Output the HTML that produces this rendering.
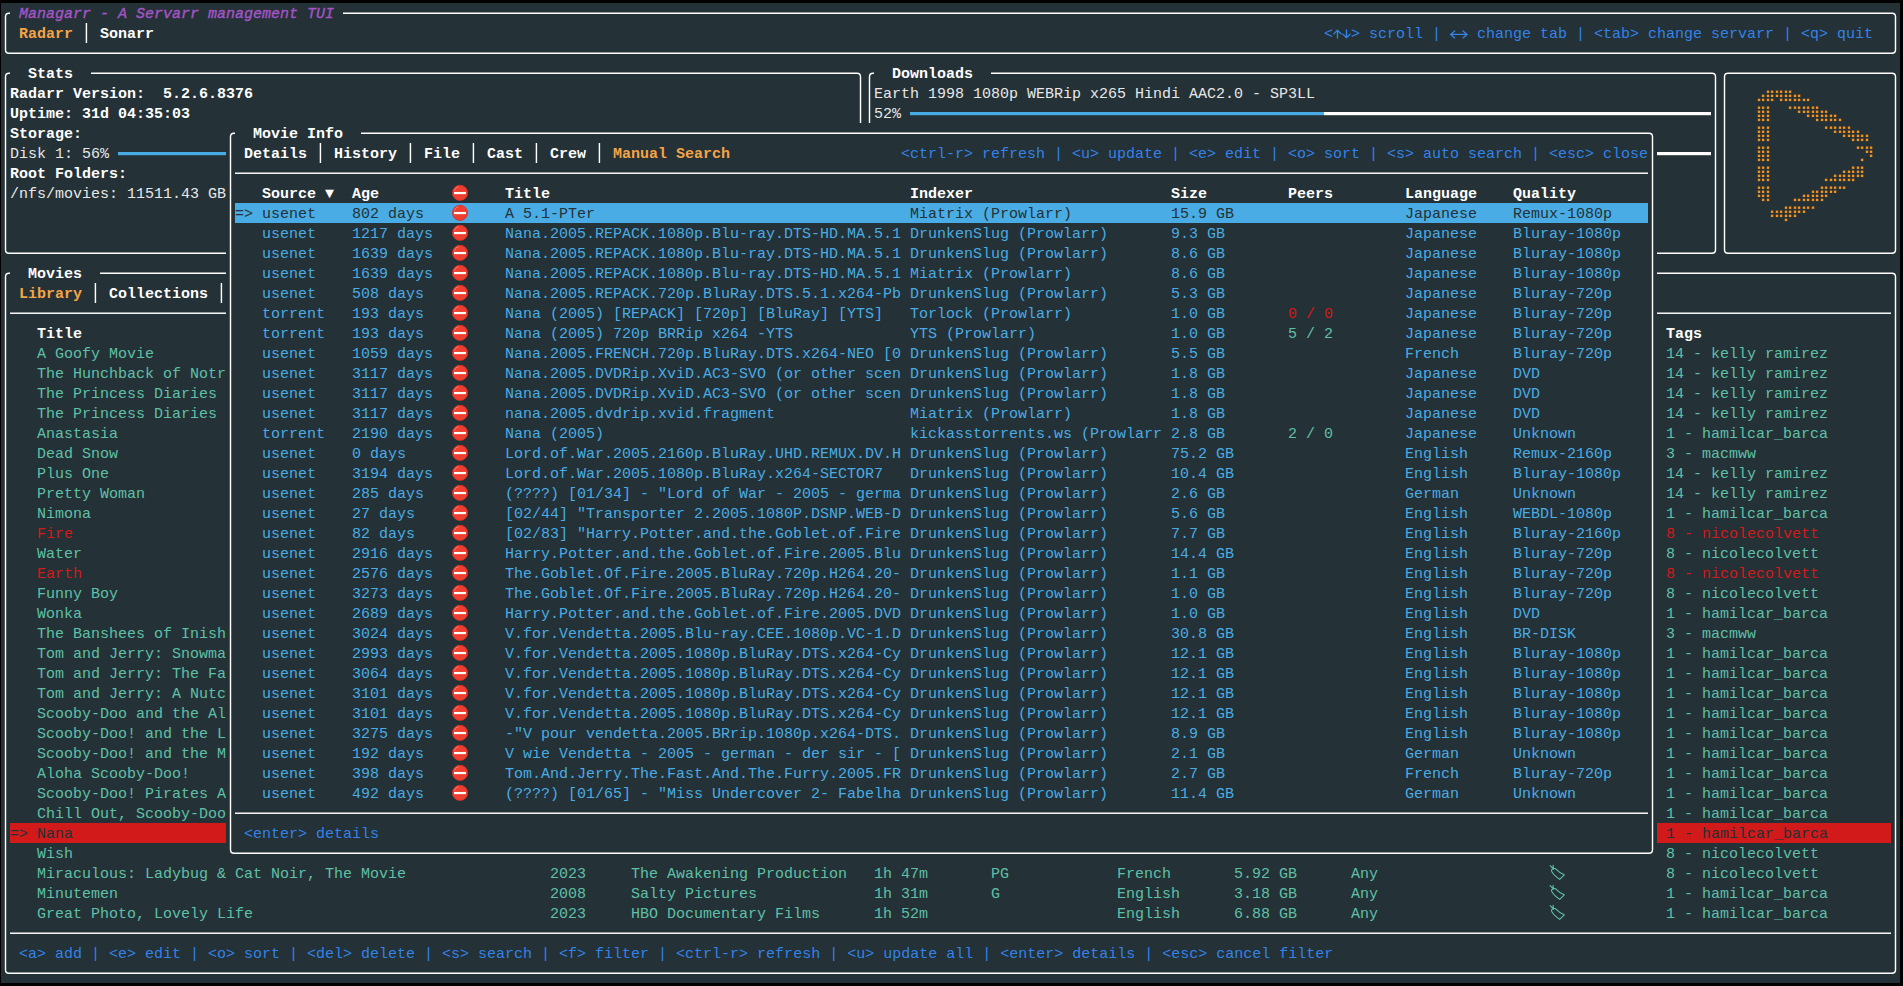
<!DOCTYPE html>
<html><head><meta charset="utf-8"><title>Managarr</title><style>
html,body{margin:0;padding:0;background:#000;width:1903px;height:986px;overflow:hidden;}
#t{position:absolute;left:1px;top:3px;width:1899px;height:980px;background:#243136;overflow:hidden;}
.x{position:absolute;white-space:pre;font-family:"Liberation Mono",monospace;font-size:15px;line-height:20px;height:20px;}
.b{font-weight:bold;}.i{font-style:italic;-webkit-text-stroke:0.35px currentColor;}
.r{position:absolute;}
svg{position:absolute;left:0;top:0;overflow:visible;}
</style></head><body><div id="t">
<svg width="1899" height="980" viewBox="0 0 1899 980"><path d="M8.00 10.30H1891.00Q1894.50 10.30 1894.50 13.80V46.80Q1894.50 50.30 1891.00 50.30H8.00Q4.50 50.30 4.50 46.80V13.80Q4.50 10.30 8.00 10.30Z" fill="none" stroke="#ffffff" stroke-width="1.45"/></svg>
<div class="r" style="left:9px;top:0px;width:333px;height:20px;background:#243136"></div>
<div class="x i" style="left:18px;top:2px;color:#a455c8">Managarr - A Servarr management TUI</div>
<div class="x b" style="left:18px;top:22px;color:#f5a447">Radarr</div>
<svg width="1899" height="980" viewBox="0 0 1899 980"><rect x="84.70" y="20" width="1.45" height="20" fill="#ffffff"/></svg>
<div class="x b" style="left:99px;top:22px;color:#ffffff">Sonarr</div>
<div class="x" style="left:1323px;top:22px;color:#3383e8">&lt;</div>
<div class="x" style="left:1350px;top:22px;color:#3383e8">&gt; scroll | </div>
<svg width="1899" height="980" viewBox="0 0 1899 980"><path d="M1336.50 35.10V27.20M1332.90 30.90L1336.50 27.20L1340.10 30.90M1345.50 26.90V34.80M1341.90 31.10L1345.50 34.80L1349.10 31.10M1449.50 31.40H1466.20M1453.70 27.90L1449.70 31.40L1453.70 34.90M1462.00 27.90L1466.00 31.40L1462.00 34.90" fill="none" stroke="#3383e8" stroke-width="1.35" stroke-linecap="round" stroke-linejoin="round"/></svg>
<div class="x" style="left:1467px;top:22px;color:#3383e8"> change tab | &lt;tab&gt; change servarr | &lt;q&gt; quit</div>
<svg width="1899" height="980" viewBox="0 0 1899 980"><path d="M8.00 70.30H856.00Q859.50 70.30 859.50 73.80V246.80Q859.50 250.30 856.00 250.30H8.00Q4.50 250.30 4.50 246.80V73.80Q4.50 70.30 8.00 70.30Z" fill="none" stroke="#ffffff" stroke-width="1.45"/></svg>
<div class="r" style="left:9px;top:60px;width:81px;height:20px;background:#243136"></div>
<div class="x b" style="left:27px;top:62px;color:#ffffff">Stats</div>
<div class="x b" style="left:9px;top:82px;color:#ffffff">Radarr Version:  5.2.6.8376</div>
<div class="x b" style="left:9px;top:102px;color:#ffffff">Uptime: 31d 04:35:03</div>
<div class="x b" style="left:9px;top:122px;color:#ffffff">Storage:</div>
<div class="x" style="left:9px;top:142px;color:#e8e8e8">Disk 1: 56%</div>
<svg width="1899" height="980" viewBox="0 0 1899 980"><rect x="117" y="149.00" width="405" height="3.2" fill="#4aace4"/><rect x="531" y="149.00" width="324" height="3.2" fill="#ffffff"/></svg>
<div class="x b" style="left:9px;top:162px;color:#ffffff">Root Folders:</div>
<div class="x" style="left:9px;top:182px;color:#e8e8e8">/nfs/movies: 11511.43 GB</div>
<svg width="1899" height="980" viewBox="0 0 1899 980"><path d="M872.00 70.30H1711.00Q1714.50 70.30 1714.50 73.80V246.80Q1714.50 250.30 1711.00 250.30H872.00Q868.50 250.30 868.50 246.80V73.80Q868.50 70.30 872.00 70.30Z" fill="none" stroke="#ffffff" stroke-width="1.45"/></svg>
<div class="r" style="left:873px;top:60px;width:117px;height:20px;background:#243136"></div>
<div class="x b" style="left:891px;top:62px;color:#ffffff">Downloads</div>
<div class="x" style="left:873px;top:82px;color:#e8e8e8">Earth 1998 1080p WEBRip x265 Hindi AAC2.0 - SP3LL</div>
<div class="x" style="left:873px;top:102px;color:#e8e8e8">52%</div>
<svg width="1899" height="980" viewBox="0 0 1899 980"><rect x="909" y="109.00" width="414" height="3.2" fill="#4aace4"/><rect x="1323" y="109.00" width="387" height="3.2" fill="#ffffff"/><rect x="1656" y="149.00" width="54" height="3.2" fill="#ffffff"/><path d="M1727.00 70.30H1891.00Q1894.50 70.30 1894.50 73.80V246.80Q1894.50 250.30 1891.00 250.30H1727.00Q1723.50 250.30 1723.50 246.80V73.80Q1723.50 70.30 1727.00 70.30Z" fill="none" stroke="#ffffff" stroke-width="1.45"/><rect x="1765.80" y="87.57" width="2.4" height="2.4" fill="#f7931a"/><rect x="1769.90" y="87.57" width="2.4" height="2.4" fill="#f7931a"/><rect x="1774.80" y="87.57" width="2.4" height="2.4" fill="#f7931a"/><rect x="1778.90" y="87.57" width="2.4" height="2.4" fill="#f7931a"/><rect x="1783.80" y="87.57" width="2.4" height="2.4" fill="#f7931a"/><rect x="1787.90" y="87.57" width="2.4" height="2.4" fill="#f7931a"/><rect x="1760.90" y="91.64" width="2.4" height="2.4" fill="#f7931a"/><rect x="1765.80" y="91.64" width="2.4" height="2.4" fill="#f7931a"/><rect x="1769.90" y="91.64" width="2.4" height="2.4" fill="#f7931a"/><rect x="1774.80" y="91.64" width="2.4" height="2.4" fill="#f7931a"/><rect x="1778.90" y="91.64" width="2.4" height="2.4" fill="#f7931a"/><rect x="1783.80" y="91.64" width="2.4" height="2.4" fill="#f7931a"/><rect x="1787.90" y="91.64" width="2.4" height="2.4" fill="#f7931a"/><rect x="1792.80" y="91.64" width="2.4" height="2.4" fill="#f7931a"/><rect x="1796.90" y="91.64" width="2.4" height="2.4" fill="#f7931a"/><rect x="1756.80" y="95.71" width="2.4" height="2.4" fill="#f7931a"/><rect x="1760.90" y="95.71" width="2.4" height="2.4" fill="#f7931a"/><rect x="1765.80" y="95.71" width="2.4" height="2.4" fill="#f7931a"/><rect x="1769.90" y="95.71" width="2.4" height="2.4" fill="#f7931a"/><rect x="1778.90" y="95.71" width="2.4" height="2.4" fill="#f7931a"/><rect x="1783.80" y="95.71" width="2.4" height="2.4" fill="#f7931a"/><rect x="1787.90" y="95.71" width="2.4" height="2.4" fill="#f7931a"/><rect x="1792.80" y="95.71" width="2.4" height="2.4" fill="#f7931a"/><rect x="1796.90" y="95.71" width="2.4" height="2.4" fill="#f7931a"/><rect x="1801.80" y="95.71" width="2.4" height="2.4" fill="#f7931a"/><rect x="1805.90" y="95.71" width="2.4" height="2.4" fill="#f7931a"/><rect x="1756.80" y="103.50" width="2.4" height="2.4" fill="#f7931a"/><rect x="1760.90" y="103.50" width="2.4" height="2.4" fill="#f7931a"/><rect x="1765.80" y="103.50" width="2.4" height="2.4" fill="#f7931a"/><rect x="1787.90" y="103.50" width="2.4" height="2.4" fill="#f7931a"/><rect x="1792.80" y="103.50" width="2.4" height="2.4" fill="#f7931a"/><rect x="1796.90" y="103.50" width="2.4" height="2.4" fill="#f7931a"/><rect x="1801.80" y="103.50" width="2.4" height="2.4" fill="#f7931a"/><rect x="1805.90" y="103.50" width="2.4" height="2.4" fill="#f7931a"/><rect x="1810.80" y="103.50" width="2.4" height="2.4" fill="#f7931a"/><rect x="1814.90" y="103.50" width="2.4" height="2.4" fill="#f7931a"/><rect x="1756.80" y="107.57" width="2.4" height="2.4" fill="#f7931a"/><rect x="1760.90" y="107.57" width="2.4" height="2.4" fill="#f7931a"/><rect x="1765.80" y="107.57" width="2.4" height="2.4" fill="#f7931a"/><rect x="1796.90" y="107.57" width="2.4" height="2.4" fill="#f7931a"/><rect x="1801.80" y="107.57" width="2.4" height="2.4" fill="#f7931a"/><rect x="1805.90" y="107.57" width="2.4" height="2.4" fill="#f7931a"/><rect x="1810.80" y="107.57" width="2.4" height="2.4" fill="#f7931a"/><rect x="1814.90" y="107.57" width="2.4" height="2.4" fill="#f7931a"/><rect x="1819.80" y="107.57" width="2.4" height="2.4" fill="#f7931a"/><rect x="1823.90" y="107.57" width="2.4" height="2.4" fill="#f7931a"/><rect x="1756.80" y="111.64" width="2.4" height="2.4" fill="#f7931a"/><rect x="1760.90" y="111.64" width="2.4" height="2.4" fill="#f7931a"/><rect x="1765.80" y="111.64" width="2.4" height="2.4" fill="#f7931a"/><rect x="1805.90" y="111.64" width="2.4" height="2.4" fill="#f7931a"/><rect x="1810.80" y="111.64" width="2.4" height="2.4" fill="#f7931a"/><rect x="1814.90" y="111.64" width="2.4" height="2.4" fill="#f7931a"/><rect x="1819.80" y="111.64" width="2.4" height="2.4" fill="#f7931a"/><rect x="1823.90" y="111.64" width="2.4" height="2.4" fill="#f7931a"/><rect x="1828.80" y="111.64" width="2.4" height="2.4" fill="#f7931a"/><rect x="1832.90" y="111.64" width="2.4" height="2.4" fill="#f7931a"/><rect x="1756.80" y="115.71" width="2.4" height="2.4" fill="#f7931a"/><rect x="1760.90" y="115.71" width="2.4" height="2.4" fill="#f7931a"/><rect x="1765.80" y="115.71" width="2.4" height="2.4" fill="#f7931a"/><rect x="1814.90" y="115.71" width="2.4" height="2.4" fill="#f7931a"/><rect x="1819.80" y="115.71" width="2.4" height="2.4" fill="#f7931a"/><rect x="1823.90" y="115.71" width="2.4" height="2.4" fill="#f7931a"/><rect x="1828.80" y="115.71" width="2.4" height="2.4" fill="#f7931a"/><rect x="1832.90" y="115.71" width="2.4" height="2.4" fill="#f7931a"/><rect x="1837.80" y="115.71" width="2.4" height="2.4" fill="#f7931a"/><rect x="1756.80" y="123.50" width="2.4" height="2.4" fill="#f7931a"/><rect x="1760.90" y="123.50" width="2.4" height="2.4" fill="#f7931a"/><rect x="1765.80" y="123.50" width="2.4" height="2.4" fill="#f7931a"/><rect x="1823.90" y="123.50" width="2.4" height="2.4" fill="#f7931a"/><rect x="1828.80" y="123.50" width="2.4" height="2.4" fill="#f7931a"/><rect x="1832.90" y="123.50" width="2.4" height="2.4" fill="#f7931a"/><rect x="1837.80" y="123.50" width="2.4" height="2.4" fill="#f7931a"/><rect x="1841.90" y="123.50" width="2.4" height="2.4" fill="#f7931a"/><rect x="1846.80" y="123.50" width="2.4" height="2.4" fill="#f7931a"/><rect x="1756.80" y="127.57" width="2.4" height="2.4" fill="#f7931a"/><rect x="1760.90" y="127.57" width="2.4" height="2.4" fill="#f7931a"/><rect x="1765.80" y="127.57" width="2.4" height="2.4" fill="#f7931a"/><rect x="1832.90" y="127.57" width="2.4" height="2.4" fill="#f7931a"/><rect x="1837.80" y="127.57" width="2.4" height="2.4" fill="#f7931a"/><rect x="1841.90" y="127.57" width="2.4" height="2.4" fill="#f7931a"/><rect x="1846.80" y="127.57" width="2.4" height="2.4" fill="#f7931a"/><rect x="1850.90" y="127.57" width="2.4" height="2.4" fill="#f7931a"/><rect x="1855.80" y="127.57" width="2.4" height="2.4" fill="#f7931a"/><rect x="1756.80" y="131.64" width="2.4" height="2.4" fill="#f7931a"/><rect x="1760.90" y="131.64" width="2.4" height="2.4" fill="#f7931a"/><rect x="1765.80" y="131.64" width="2.4" height="2.4" fill="#f7931a"/><rect x="1841.90" y="131.64" width="2.4" height="2.4" fill="#f7931a"/><rect x="1846.80" y="131.64" width="2.4" height="2.4" fill="#f7931a"/><rect x="1850.90" y="131.64" width="2.4" height="2.4" fill="#f7931a"/><rect x="1855.80" y="131.64" width="2.4" height="2.4" fill="#f7931a"/><rect x="1859.90" y="131.64" width="2.4" height="2.4" fill="#f7931a"/><rect x="1864.80" y="131.64" width="2.4" height="2.4" fill="#f7931a"/><rect x="1756.80" y="135.71" width="2.4" height="2.4" fill="#f7931a"/><rect x="1760.90" y="135.71" width="2.4" height="2.4" fill="#f7931a"/><rect x="1765.80" y="135.71" width="2.4" height="2.4" fill="#f7931a"/><rect x="1850.90" y="135.71" width="2.4" height="2.4" fill="#f7931a"/><rect x="1855.80" y="135.71" width="2.4" height="2.4" fill="#f7931a"/><rect x="1859.90" y="135.71" width="2.4" height="2.4" fill="#f7931a"/><rect x="1864.80" y="135.71" width="2.4" height="2.4" fill="#f7931a"/><rect x="1756.80" y="143.50" width="2.4" height="2.4" fill="#f7931a"/><rect x="1760.90" y="143.50" width="2.4" height="2.4" fill="#f7931a"/><rect x="1765.80" y="143.50" width="2.4" height="2.4" fill="#f7931a"/><rect x="1855.80" y="143.50" width="2.4" height="2.4" fill="#f7931a"/><rect x="1859.90" y="143.50" width="2.4" height="2.4" fill="#f7931a"/><rect x="1864.80" y="143.50" width="2.4" height="2.4" fill="#f7931a"/><rect x="1868.90" y="143.50" width="2.4" height="2.4" fill="#f7931a"/><rect x="1756.80" y="147.57" width="2.4" height="2.4" fill="#f7931a"/><rect x="1760.90" y="147.57" width="2.4" height="2.4" fill="#f7931a"/><rect x="1765.80" y="147.57" width="2.4" height="2.4" fill="#f7931a"/><rect x="1864.80" y="147.57" width="2.4" height="2.4" fill="#f7931a"/><rect x="1868.90" y="147.57" width="2.4" height="2.4" fill="#f7931a"/><rect x="1756.80" y="151.64" width="2.4" height="2.4" fill="#f7931a"/><rect x="1760.90" y="151.64" width="2.4" height="2.4" fill="#f7931a"/><rect x="1765.80" y="151.64" width="2.4" height="2.4" fill="#f7931a"/><rect x="1868.90" y="151.64" width="2.4" height="2.4" fill="#f7931a"/><rect x="1756.80" y="155.71" width="2.4" height="2.4" fill="#f7931a"/><rect x="1760.90" y="155.71" width="2.4" height="2.4" fill="#f7931a"/><rect x="1765.80" y="155.71" width="2.4" height="2.4" fill="#f7931a"/><rect x="1859.90" y="155.71" width="2.4" height="2.4" fill="#f7931a"/><rect x="1756.80" y="163.50" width="2.4" height="2.4" fill="#f7931a"/><rect x="1760.90" y="163.50" width="2.4" height="2.4" fill="#f7931a"/><rect x="1765.80" y="163.50" width="2.4" height="2.4" fill="#f7931a"/><rect x="1850.90" y="163.50" width="2.4" height="2.4" fill="#f7931a"/><rect x="1855.80" y="163.50" width="2.4" height="2.4" fill="#f7931a"/><rect x="1859.90" y="163.50" width="2.4" height="2.4" fill="#f7931a"/><rect x="1756.80" y="167.57" width="2.4" height="2.4" fill="#f7931a"/><rect x="1760.90" y="167.57" width="2.4" height="2.4" fill="#f7931a"/><rect x="1765.80" y="167.57" width="2.4" height="2.4" fill="#f7931a"/><rect x="1841.90" y="167.57" width="2.4" height="2.4" fill="#f7931a"/><rect x="1846.80" y="167.57" width="2.4" height="2.4" fill="#f7931a"/><rect x="1850.90" y="167.57" width="2.4" height="2.4" fill="#f7931a"/><rect x="1855.80" y="167.57" width="2.4" height="2.4" fill="#f7931a"/><rect x="1859.90" y="167.57" width="2.4" height="2.4" fill="#f7931a"/><rect x="1756.80" y="171.64" width="2.4" height="2.4" fill="#f7931a"/><rect x="1760.90" y="171.64" width="2.4" height="2.4" fill="#f7931a"/><rect x="1765.80" y="171.64" width="2.4" height="2.4" fill="#f7931a"/><rect x="1832.90" y="171.64" width="2.4" height="2.4" fill="#f7931a"/><rect x="1837.80" y="171.64" width="2.4" height="2.4" fill="#f7931a"/><rect x="1841.90" y="171.64" width="2.4" height="2.4" fill="#f7931a"/><rect x="1846.80" y="171.64" width="2.4" height="2.4" fill="#f7931a"/><rect x="1850.90" y="171.64" width="2.4" height="2.4" fill="#f7931a"/><rect x="1855.80" y="171.64" width="2.4" height="2.4" fill="#f7931a"/><rect x="1859.90" y="171.64" width="2.4" height="2.4" fill="#f7931a"/><rect x="1756.80" y="175.71" width="2.4" height="2.4" fill="#f7931a"/><rect x="1760.90" y="175.71" width="2.4" height="2.4" fill="#f7931a"/><rect x="1765.80" y="175.71" width="2.4" height="2.4" fill="#f7931a"/><rect x="1823.90" y="175.71" width="2.4" height="2.4" fill="#f7931a"/><rect x="1828.80" y="175.71" width="2.4" height="2.4" fill="#f7931a"/><rect x="1832.90" y="175.71" width="2.4" height="2.4" fill="#f7931a"/><rect x="1837.80" y="175.71" width="2.4" height="2.4" fill="#f7931a"/><rect x="1841.90" y="175.71" width="2.4" height="2.4" fill="#f7931a"/><rect x="1846.80" y="175.71" width="2.4" height="2.4" fill="#f7931a"/><rect x="1850.90" y="175.71" width="2.4" height="2.4" fill="#f7931a"/><rect x="1756.80" y="183.50" width="2.4" height="2.4" fill="#f7931a"/><rect x="1760.90" y="183.50" width="2.4" height="2.4" fill="#f7931a"/><rect x="1765.80" y="183.50" width="2.4" height="2.4" fill="#f7931a"/><rect x="1819.80" y="183.50" width="2.4" height="2.4" fill="#f7931a"/><rect x="1823.90" y="183.50" width="2.4" height="2.4" fill="#f7931a"/><rect x="1828.80" y="183.50" width="2.4" height="2.4" fill="#f7931a"/><rect x="1832.90" y="183.50" width="2.4" height="2.4" fill="#f7931a"/><rect x="1837.80" y="183.50" width="2.4" height="2.4" fill="#f7931a"/><rect x="1841.90" y="183.50" width="2.4" height="2.4" fill="#f7931a"/><rect x="1756.80" y="187.57" width="2.4" height="2.4" fill="#f7931a"/><rect x="1760.90" y="187.57" width="2.4" height="2.4" fill="#f7931a"/><rect x="1765.80" y="187.57" width="2.4" height="2.4" fill="#f7931a"/><rect x="1810.80" y="187.57" width="2.4" height="2.4" fill="#f7931a"/><rect x="1814.90" y="187.57" width="2.4" height="2.4" fill="#f7931a"/><rect x="1819.80" y="187.57" width="2.4" height="2.4" fill="#f7931a"/><rect x="1823.90" y="187.57" width="2.4" height="2.4" fill="#f7931a"/><rect x="1828.80" y="187.57" width="2.4" height="2.4" fill="#f7931a"/><rect x="1832.90" y="187.57" width="2.4" height="2.4" fill="#f7931a"/><rect x="1756.80" y="191.64" width="2.4" height="2.4" fill="#f7931a"/><rect x="1760.90" y="191.64" width="2.4" height="2.4" fill="#f7931a"/><rect x="1765.80" y="191.64" width="2.4" height="2.4" fill="#f7931a"/><rect x="1801.80" y="191.64" width="2.4" height="2.4" fill="#f7931a"/><rect x="1805.90" y="191.64" width="2.4" height="2.4" fill="#f7931a"/><rect x="1810.80" y="191.64" width="2.4" height="2.4" fill="#f7931a"/><rect x="1814.90" y="191.64" width="2.4" height="2.4" fill="#f7931a"/><rect x="1819.80" y="191.64" width="2.4" height="2.4" fill="#f7931a"/><rect x="1823.90" y="191.64" width="2.4" height="2.4" fill="#f7931a"/><rect x="1760.90" y="195.71" width="2.4" height="2.4" fill="#f7931a"/><rect x="1765.80" y="195.71" width="2.4" height="2.4" fill="#f7931a"/><rect x="1792.80" y="195.71" width="2.4" height="2.4" fill="#f7931a"/><rect x="1796.90" y="195.71" width="2.4" height="2.4" fill="#f7931a"/><rect x="1801.80" y="195.71" width="2.4" height="2.4" fill="#f7931a"/><rect x="1805.90" y="195.71" width="2.4" height="2.4" fill="#f7931a"/><rect x="1810.80" y="195.71" width="2.4" height="2.4" fill="#f7931a"/><rect x="1814.90" y="195.71" width="2.4" height="2.4" fill="#f7931a"/><rect x="1819.80" y="195.71" width="2.4" height="2.4" fill="#f7931a"/><rect x="1783.80" y="203.50" width="2.4" height="2.4" fill="#f7931a"/><rect x="1787.90" y="203.50" width="2.4" height="2.4" fill="#f7931a"/><rect x="1792.80" y="203.50" width="2.4" height="2.4" fill="#f7931a"/><rect x="1796.90" y="203.50" width="2.4" height="2.4" fill="#f7931a"/><rect x="1801.80" y="203.50" width="2.4" height="2.4" fill="#f7931a"/><rect x="1805.90" y="203.50" width="2.4" height="2.4" fill="#f7931a"/><rect x="1810.80" y="203.50" width="2.4" height="2.4" fill="#f7931a"/><rect x="1769.90" y="207.57" width="2.4" height="2.4" fill="#f7931a"/><rect x="1774.80" y="207.57" width="2.4" height="2.4" fill="#f7931a"/><rect x="1778.90" y="207.57" width="2.4" height="2.4" fill="#f7931a"/><rect x="1783.80" y="207.57" width="2.4" height="2.4" fill="#f7931a"/><rect x="1787.90" y="207.57" width="2.4" height="2.4" fill="#f7931a"/><rect x="1792.80" y="207.57" width="2.4" height="2.4" fill="#f7931a"/><rect x="1796.90" y="207.57" width="2.4" height="2.4" fill="#f7931a"/><rect x="1801.80" y="207.57" width="2.4" height="2.4" fill="#f7931a"/><rect x="1769.90" y="211.64" width="2.4" height="2.4" fill="#f7931a"/><rect x="1774.80" y="211.64" width="2.4" height="2.4" fill="#f7931a"/><rect x="1778.90" y="211.64" width="2.4" height="2.4" fill="#f7931a"/><rect x="1783.80" y="211.64" width="2.4" height="2.4" fill="#f7931a"/><rect x="1787.90" y="211.64" width="2.4" height="2.4" fill="#f7931a"/><rect x="1792.80" y="211.64" width="2.4" height="2.4" fill="#f7931a"/><rect x="1783.80" y="215.71" width="2.4" height="2.4" fill="#f7931a"/><path d="M8.00 270.30H1891.00Q1894.50 270.30 1894.50 273.80V966.80Q1894.50 970.30 1891.00 970.30H8.00Q4.50 970.30 4.50 966.80V273.80Q4.50 270.30 8.00 270.30Z" fill="none" stroke="#ffffff" stroke-width="1.45"/></svg>
<div class="r" style="left:9px;top:260px;width:90px;height:20px;background:#243136"></div>
<div class="x b" style="left:27px;top:262px;color:#ffffff">Movies</div>
<div class="x b" style="left:18px;top:282px;color:#f5a447">Library</div>
<svg width="1899" height="980" viewBox="0 0 1899 980"><rect x="93.70" y="280" width="1.45" height="20" fill="#ffffff"/></svg>
<div class="x b" style="left:108px;top:282px;color:#ffffff">Collections</div>
<svg width="1899" height="980" viewBox="0 0 1899 980"><rect x="219.70" y="280" width="1.45" height="20" fill="#ffffff"/><rect x="9" y="309.50" width="1881" height="1.45" fill="#ffffff"/></svg>
<div class="x b" style="left:36px;top:322px;color:#ffffff">Title</div>
<div class="x b" style="left:1665px;top:322px;color:#ffffff">Tags</div>
<div class="x" style="left:36px;top:342px;color:#5fc0a8">A Goofy Movie</div>
<div class="x" style="left:1665px;top:342px;color:#5fc0a8">14 - kelly ramirez</div>
<div class="x" style="left:36px;top:362px;color:#5fc0a8">The Hunchback of Notr</div>
<div class="x" style="left:1665px;top:362px;color:#5fc0a8">14 - kelly ramirez</div>
<div class="x" style="left:36px;top:382px;color:#5fc0a8">The Princess Diaries</div>
<div class="x" style="left:1665px;top:382px;color:#5fc0a8">14 - kelly ramirez</div>
<div class="x" style="left:36px;top:402px;color:#5fc0a8">The Princess Diaries</div>
<div class="x" style="left:1665px;top:402px;color:#5fc0a8">14 - kelly ramirez</div>
<div class="x" style="left:36px;top:422px;color:#5fc0a8">Anastasia</div>
<div class="x" style="left:1665px;top:422px;color:#5fc0a8">1 - hamilcar_barca</div>
<div class="x" style="left:36px;top:442px;color:#5fc0a8">Dead Snow</div>
<div class="x" style="left:1665px;top:442px;color:#5fc0a8">3 - macmww</div>
<div class="x" style="left:36px;top:462px;color:#5fc0a8">Plus One</div>
<div class="x" style="left:1665px;top:462px;color:#5fc0a8">14 - kelly ramirez</div>
<div class="x" style="left:36px;top:482px;color:#5fc0a8">Pretty Woman</div>
<div class="x" style="left:1665px;top:482px;color:#5fc0a8">14 - kelly ramirez</div>
<div class="x" style="left:36px;top:502px;color:#5fc0a8">Nimona</div>
<div class="x" style="left:1665px;top:502px;color:#5fc0a8">1 - hamilcar_barca</div>
<div class="x" style="left:36px;top:522px;color:#d21a1a">Fire</div>
<div class="x" style="left:1665px;top:522px;color:#d21a1a">8 - nicolecolvett</div>
<div class="x" style="left:36px;top:542px;color:#5fc0a8">Water</div>
<div class="x" style="left:1665px;top:542px;color:#5fc0a8">8 - nicolecolvett</div>
<div class="x" style="left:36px;top:562px;color:#d21a1a">Earth</div>
<div class="x" style="left:1665px;top:562px;color:#d21a1a">8 - nicolecolvett</div>
<div class="x" style="left:36px;top:582px;color:#5fc0a8">Funny Boy</div>
<div class="x" style="left:1665px;top:582px;color:#5fc0a8">8 - nicolecolvett</div>
<div class="x" style="left:36px;top:602px;color:#5fc0a8">Wonka</div>
<div class="x" style="left:1665px;top:602px;color:#5fc0a8">1 - hamilcar_barca</div>
<div class="x" style="left:36px;top:622px;color:#5fc0a8">The Banshees of Inish</div>
<div class="x" style="left:1665px;top:622px;color:#5fc0a8">3 - macmww</div>
<div class="x" style="left:36px;top:642px;color:#5fc0a8">Tom and Jerry: Snowma</div>
<div class="x" style="left:1665px;top:642px;color:#5fc0a8">1 - hamilcar_barca</div>
<div class="x" style="left:36px;top:662px;color:#5fc0a8">Tom and Jerry: The Fa</div>
<div class="x" style="left:1665px;top:662px;color:#5fc0a8">1 - hamilcar_barca</div>
<div class="x" style="left:36px;top:682px;color:#5fc0a8">Tom and Jerry: A Nutc</div>
<div class="x" style="left:1665px;top:682px;color:#5fc0a8">1 - hamilcar_barca</div>
<div class="x" style="left:36px;top:702px;color:#5fc0a8">Scooby-Doo and the Al</div>
<div class="x" style="left:1665px;top:702px;color:#5fc0a8">1 - hamilcar_barca</div>
<div class="x" style="left:36px;top:722px;color:#5fc0a8">Scooby-Doo! and the L</div>
<div class="x" style="left:1665px;top:722px;color:#5fc0a8">1 - hamilcar_barca</div>
<div class="x" style="left:36px;top:742px;color:#5fc0a8">Scooby-Doo! and the M</div>
<div class="x" style="left:1665px;top:742px;color:#5fc0a8">1 - hamilcar_barca</div>
<div class="x" style="left:36px;top:762px;color:#5fc0a8">Aloha Scooby-Doo!</div>
<div class="x" style="left:1665px;top:762px;color:#5fc0a8">1 - hamilcar_barca</div>
<div class="x" style="left:36px;top:782px;color:#5fc0a8">Scooby-Doo! Pirates A</div>
<div class="x" style="left:1665px;top:782px;color:#5fc0a8">1 - hamilcar_barca</div>
<div class="x" style="left:36px;top:802px;color:#5fc0a8">Chill Out, Scooby-Doo</div>
<div class="x" style="left:1665px;top:802px;color:#5fc0a8">1 - hamilcar_barca</div>
<div class="r" style="left:9px;top:820px;width:216px;height:20px;background:#d21a1a"></div>
<div class="r" style="left:1656px;top:820px;width:234px;height:20px;background:#d21a1a"></div>
<div class="x" style="left:9px;top:822px;color:#243136">=&gt;</div>
<div class="x" style="left:36px;top:822px;color:#243136">Nana</div>
<div class="x" style="left:1665px;top:822px;color:#243136">1 - hamilcar_barca</div>
<div class="x" style="left:36px;top:842px;color:#5fc0a8">Wish</div>
<div class="x" style="left:1665px;top:842px;color:#5fc0a8">8 - nicolecolvett</div>
<div class="x" style="left:36px;top:862px;color:#5fc0a8">Miraculous: Ladybug &amp; Cat Noir, The Movie</div>
<div class="x" style="left:549px;top:862px;color:#5fc0a8">2023</div>
<div class="x" style="left:630px;top:862px;color:#5fc0a8">The Awakening Production</div>
<div class="x" style="left:873px;top:862px;color:#5fc0a8">1h 47m</div>
<div class="x" style="left:990px;top:862px;color:#5fc0a8">PG</div>
<div class="x" style="left:1116px;top:862px;color:#5fc0a8">French</div>
<div class="x" style="left:1233px;top:862px;color:#5fc0a8">5.92 GB</div>
<div class="x" style="left:1350px;top:862px;color:#5fc0a8">Any</div>
<svg width="1899" height="980" viewBox="0 0 1899 980"><path d="M1550.40 866.90Q1550.50 870.40 1558.70 876.40L1563.30 871.80Q1558.40 869.90 1554.40 865.60Q1552.50 865.30 1550.40 866.90Z" fill="none" stroke="#5fc0a8" stroke-width="1.1" stroke-linejoin="round"/><path d="M1549.10 862.60L1552.40 865.80L1552.10 862.30" fill="none" stroke="#5fc0a8" stroke-width="1.1" stroke-linecap="round"/></svg>
<div class="x" style="left:1665px;top:862px;color:#5fc0a8">8 - nicolecolvett</div>
<div class="x" style="left:36px;top:882px;color:#5fc0a8">Minutemen</div>
<div class="x" style="left:549px;top:882px;color:#5fc0a8">2008</div>
<div class="x" style="left:630px;top:882px;color:#5fc0a8">Salty Pictures</div>
<div class="x" style="left:873px;top:882px;color:#5fc0a8">1h 31m</div>
<div class="x" style="left:990px;top:882px;color:#5fc0a8">G</div>
<div class="x" style="left:1116px;top:882px;color:#5fc0a8">English</div>
<div class="x" style="left:1233px;top:882px;color:#5fc0a8">3.18 GB</div>
<div class="x" style="left:1350px;top:882px;color:#5fc0a8">Any</div>
<svg width="1899" height="980" viewBox="0 0 1899 980"><path d="M1550.40 886.90Q1550.50 890.40 1558.70 896.40L1563.30 891.80Q1558.40 889.90 1554.40 885.60Q1552.50 885.30 1550.40 886.90Z" fill="none" stroke="#5fc0a8" stroke-width="1.1" stroke-linejoin="round"/><path d="M1549.10 882.60L1552.40 885.80L1552.10 882.30" fill="none" stroke="#5fc0a8" stroke-width="1.1" stroke-linecap="round"/></svg>
<div class="x" style="left:1665px;top:882px;color:#5fc0a8">1 - hamilcar_barca</div>
<div class="x" style="left:36px;top:902px;color:#5fc0a8">Great Photo, Lovely Life</div>
<div class="x" style="left:549px;top:902px;color:#5fc0a8">2023</div>
<div class="x" style="left:630px;top:902px;color:#5fc0a8">HBO Documentary Films</div>
<div class="x" style="left:873px;top:902px;color:#5fc0a8">1h 52m</div>
<div class="x" style="left:1116px;top:902px;color:#5fc0a8">English</div>
<div class="x" style="left:1233px;top:902px;color:#5fc0a8">6.88 GB</div>
<div class="x" style="left:1350px;top:902px;color:#5fc0a8">Any</div>
<svg width="1899" height="980" viewBox="0 0 1899 980"><path d="M1550.40 906.90Q1550.50 910.40 1558.70 916.40L1563.30 911.80Q1558.40 909.90 1554.40 905.60Q1552.50 905.30 1550.40 906.90Z" fill="none" stroke="#5fc0a8" stroke-width="1.1" stroke-linejoin="round"/><path d="M1549.10 902.60L1552.40 905.80L1552.10 902.30" fill="none" stroke="#5fc0a8" stroke-width="1.1" stroke-linecap="round"/></svg>
<div class="x" style="left:1665px;top:902px;color:#5fc0a8">1 - hamilcar_barca</div>
<svg width="1899" height="980" viewBox="0 0 1899 980"><rect x="9" y="929.50" width="1881" height="1.45" fill="#ffffff"/></svg>
<div class="x" style="left:18px;top:942px;color:#3383e8">&lt;a&gt; add | &lt;e&gt; edit | &lt;o&gt; sort | &lt;del&gt; delete | &lt;s&gt; search | &lt;f&gt; filter | &lt;ctrl-r&gt; refresh | &lt;u&gt; update all | &lt;enter&gt; details | &lt;esc&gt; cancel filter</div>
<div class="r" style="left:225px;top:120px;width:1431px;height:740px;background:#243136"></div>
<svg width="1899" height="980" viewBox="0 0 1899 980"><path d="M233.00 130.30H1648.00Q1651.50 130.30 1651.50 133.80V846.80Q1651.50 850.30 1648.00 850.30H233.00Q229.50 850.30 229.50 846.80V133.80Q229.50 130.30 233.00 130.30Z" fill="none" stroke="#ffffff" stroke-width="1.45"/></svg>
<div class="r" style="left:234px;top:120px;width:126px;height:20px;background:#243136"></div>
<div class="x b" style="left:252px;top:122px;color:#ffffff">Movie Info</div>
<div class="x b" style="left:243px;top:142px;color:#ffffff">Details</div>
<svg width="1899" height="980" viewBox="0 0 1899 980"><rect x="318.70" y="140" width="1.45" height="20" fill="#ffffff"/></svg>
<div class="x b" style="left:333px;top:142px;color:#ffffff">History</div>
<svg width="1899" height="980" viewBox="0 0 1899 980"><rect x="408.70" y="140" width="1.45" height="20" fill="#ffffff"/></svg>
<div class="x b" style="left:423px;top:142px;color:#ffffff">File</div>
<svg width="1899" height="980" viewBox="0 0 1899 980"><rect x="471.70" y="140" width="1.45" height="20" fill="#ffffff"/></svg>
<div class="x b" style="left:486px;top:142px;color:#ffffff">Cast</div>
<svg width="1899" height="980" viewBox="0 0 1899 980"><rect x="534.70" y="140" width="1.45" height="20" fill="#ffffff"/></svg>
<div class="x b" style="left:549px;top:142px;color:#ffffff">Crew</div>
<svg width="1899" height="980" viewBox="0 0 1899 980"><rect x="597.70" y="140" width="1.45" height="20" fill="#ffffff"/></svg>
<div class="x b" style="left:612px;top:142px;color:#f5a447">Manual Search</div>
<div class="x" style="left:900px;top:142px;color:#3383e8">&lt;ctrl-r&gt; refresh | &lt;u&gt; update | &lt;e&gt; edit | &lt;o&gt; sort | &lt;s&gt; auto search | &lt;esc&gt; close</div>
<svg width="1899" height="980" viewBox="0 0 1899 980"><rect x="234" y="169.50" width="1413" height="1.45" fill="#ffffff"/></svg>
<div class="x b" style="left:261px;top:182px;color:#ffffff">Source ▼</div>
<div class="x b" style="left:351px;top:182px;color:#ffffff">Age</div>
<svg width="1899" height="980" viewBox="0 0 1899 980"><circle cx="459.00" cy="189.85" r="7.6" fill="#ee3e2f" stroke="#d9302a" stroke-width="0.8"/><path d="M453.40 187.25Q454.40 184.45 457.20 183.65" fill="none" stroke="#ff8a7a" stroke-width="1" stroke-linecap="round" opacity="0.8"/><rect x="453.00" y="188.95" width="12" height="2.2" fill="#fff"/></svg>
<div class="x b" style="left:504px;top:182px;color:#ffffff">Title</div>
<div class="x b" style="left:909px;top:182px;color:#ffffff">Indexer</div>
<div class="x b" style="left:1170px;top:182px;color:#ffffff">Size</div>
<div class="x b" style="left:1287px;top:182px;color:#ffffff">Peers</div>
<div class="x b" style="left:1404px;top:182px;color:#ffffff">Language</div>
<div class="x b" style="left:1512px;top:182px;color:#ffffff">Quality</div>
<div class="r" style="left:234px;top:200px;width:1413px;height:20px;background:#4aace4"></div>
<div class="x" style="left:234px;top:202px;color:#243136">=&gt;</div>
<div class="x" style="left:261px;top:202px;color:#243136">usenet</div>
<div class="x" style="left:351px;top:202px;color:#243136">802 days</div>
<svg width="1899" height="980" viewBox="0 0 1899 980"><circle cx="459.00" cy="209.85" r="7.6" fill="#ee3e2f" stroke="#d9302a" stroke-width="0.8"/><path d="M453.40 207.25Q454.40 204.45 457.20 203.65" fill="none" stroke="#ff8a7a" stroke-width="1" stroke-linecap="round" opacity="0.8"/><rect x="453.00" y="208.95" width="12" height="2.2" fill="#fff"/></svg>
<div class="x" style="left:504px;top:202px;color:#243136">A 5.1-PTer</div>
<div class="x" style="left:909px;top:202px;color:#243136">Miatrix (Prowlarr)</div>
<div class="x" style="left:1170px;top:202px;color:#243136">15.9 GB</div>
<div class="x" style="left:1404px;top:202px;color:#243136">Japanese</div>
<div class="x" style="left:1512px;top:202px;color:#243136">Remux-1080p</div>
<div class="x" style="left:261px;top:222px;color:#4aace4">usenet</div>
<div class="x" style="left:351px;top:222px;color:#4aace4">1217 days</div>
<svg width="1899" height="980" viewBox="0 0 1899 980"><circle cx="459.00" cy="229.85" r="7.6" fill="#ee3e2f" stroke="#d9302a" stroke-width="0.8"/><path d="M453.40 227.25Q454.40 224.45 457.20 223.65" fill="none" stroke="#ff8a7a" stroke-width="1" stroke-linecap="round" opacity="0.8"/><rect x="453.00" y="228.95" width="12" height="2.2" fill="#fff"/></svg>
<div class="x" style="left:504px;top:222px;color:#4aace4">Nana.2005.REPACK.1080p.Blu-ray.DTS-HD.MA.5.1</div>
<div class="x" style="left:909px;top:222px;color:#4aace4">DrunkenSlug (Prowlarr)</div>
<div class="x" style="left:1170px;top:222px;color:#4aace4">9.3 GB</div>
<div class="x" style="left:1404px;top:222px;color:#4aace4">Japanese</div>
<div class="x" style="left:1512px;top:222px;color:#4aace4">Bluray-1080p</div>
<div class="x" style="left:261px;top:242px;color:#4aace4">usenet</div>
<div class="x" style="left:351px;top:242px;color:#4aace4">1639 days</div>
<svg width="1899" height="980" viewBox="0 0 1899 980"><circle cx="459.00" cy="249.85" r="7.6" fill="#ee3e2f" stroke="#d9302a" stroke-width="0.8"/><path d="M453.40 247.25Q454.40 244.45 457.20 243.65" fill="none" stroke="#ff8a7a" stroke-width="1" stroke-linecap="round" opacity="0.8"/><rect x="453.00" y="248.95" width="12" height="2.2" fill="#fff"/></svg>
<div class="x" style="left:504px;top:242px;color:#4aace4">Nana.2005.REPACK.1080p.Blu-ray.DTS-HD.MA.5.1</div>
<div class="x" style="left:909px;top:242px;color:#4aace4">DrunkenSlug (Prowlarr)</div>
<div class="x" style="left:1170px;top:242px;color:#4aace4">8.6 GB</div>
<div class="x" style="left:1404px;top:242px;color:#4aace4">Japanese</div>
<div class="x" style="left:1512px;top:242px;color:#4aace4">Bluray-1080p</div>
<div class="x" style="left:261px;top:262px;color:#4aace4">usenet</div>
<div class="x" style="left:351px;top:262px;color:#4aace4">1639 days</div>
<svg width="1899" height="980" viewBox="0 0 1899 980"><circle cx="459.00" cy="269.85" r="7.6" fill="#ee3e2f" stroke="#d9302a" stroke-width="0.8"/><path d="M453.40 267.25Q454.40 264.45 457.20 263.65" fill="none" stroke="#ff8a7a" stroke-width="1" stroke-linecap="round" opacity="0.8"/><rect x="453.00" y="268.95" width="12" height="2.2" fill="#fff"/></svg>
<div class="x" style="left:504px;top:262px;color:#4aace4">Nana.2005.REPACK.1080p.Blu-ray.DTS-HD.MA.5.1</div>
<div class="x" style="left:909px;top:262px;color:#4aace4">Miatrix (Prowlarr)</div>
<div class="x" style="left:1170px;top:262px;color:#4aace4">8.6 GB</div>
<div class="x" style="left:1404px;top:262px;color:#4aace4">Japanese</div>
<div class="x" style="left:1512px;top:262px;color:#4aace4">Bluray-1080p</div>
<div class="x" style="left:261px;top:282px;color:#4aace4">usenet</div>
<div class="x" style="left:351px;top:282px;color:#4aace4">508 days</div>
<svg width="1899" height="980" viewBox="0 0 1899 980"><circle cx="459.00" cy="289.85" r="7.6" fill="#ee3e2f" stroke="#d9302a" stroke-width="0.8"/><path d="M453.40 287.25Q454.40 284.45 457.20 283.65" fill="none" stroke="#ff8a7a" stroke-width="1" stroke-linecap="round" opacity="0.8"/><rect x="453.00" y="288.95" width="12" height="2.2" fill="#fff"/></svg>
<div class="x" style="left:504px;top:282px;color:#4aace4">Nana.2005.REPACK.720p.BluRay.DTS.5.1.x264-Pb</div>
<div class="x" style="left:909px;top:282px;color:#4aace4">DrunkenSlug (Prowlarr)</div>
<div class="x" style="left:1170px;top:282px;color:#4aace4">5.3 GB</div>
<div class="x" style="left:1404px;top:282px;color:#4aace4">Japanese</div>
<div class="x" style="left:1512px;top:282px;color:#4aace4">Bluray-720p</div>
<div class="x" style="left:261px;top:302px;color:#4aace4">torrent</div>
<div class="x" style="left:351px;top:302px;color:#4aace4">193 days</div>
<svg width="1899" height="980" viewBox="0 0 1899 980"><circle cx="459.00" cy="309.85" r="7.6" fill="#ee3e2f" stroke="#d9302a" stroke-width="0.8"/><path d="M453.40 307.25Q454.40 304.45 457.20 303.65" fill="none" stroke="#ff8a7a" stroke-width="1" stroke-linecap="round" opacity="0.8"/><rect x="453.00" y="308.95" width="12" height="2.2" fill="#fff"/></svg>
<div class="x" style="left:504px;top:302px;color:#4aace4">Nana (2005) [REPACK] [720p] [BluRay] [YTS]</div>
<div class="x" style="left:909px;top:302px;color:#4aace4">Torlock (Prowlarr)</div>
<div class="x" style="left:1170px;top:302px;color:#4aace4">1.0 GB</div>
<div class="x" style="left:1287px;top:302px;color:#d21a1a">0 / 0</div>
<div class="x" style="left:1404px;top:302px;color:#4aace4">Japanese</div>
<div class="x" style="left:1512px;top:302px;color:#4aace4">Bluray-720p</div>
<div class="x" style="left:261px;top:322px;color:#4aace4">torrent</div>
<div class="x" style="left:351px;top:322px;color:#4aace4">193 days</div>
<svg width="1899" height="980" viewBox="0 0 1899 980"><circle cx="459.00" cy="329.85" r="7.6" fill="#ee3e2f" stroke="#d9302a" stroke-width="0.8"/><path d="M453.40 327.25Q454.40 324.45 457.20 323.65" fill="none" stroke="#ff8a7a" stroke-width="1" stroke-linecap="round" opacity="0.8"/><rect x="453.00" y="328.95" width="12" height="2.2" fill="#fff"/></svg>
<div class="x" style="left:504px;top:322px;color:#4aace4">Nana (2005) 720p BRRip x264 -YTS</div>
<div class="x" style="left:909px;top:322px;color:#4aace4">YTS (Prowlarr)</div>
<div class="x" style="left:1170px;top:322px;color:#4aace4">1.0 GB</div>
<div class="x" style="left:1287px;top:322px;color:#5fc0a8">5 / 2</div>
<div class="x" style="left:1404px;top:322px;color:#4aace4">Japanese</div>
<div class="x" style="left:1512px;top:322px;color:#4aace4">Bluray-720p</div>
<div class="x" style="left:261px;top:342px;color:#4aace4">usenet</div>
<div class="x" style="left:351px;top:342px;color:#4aace4">1059 days</div>
<svg width="1899" height="980" viewBox="0 0 1899 980"><circle cx="459.00" cy="349.85" r="7.6" fill="#ee3e2f" stroke="#d9302a" stroke-width="0.8"/><path d="M453.40 347.25Q454.40 344.45 457.20 343.65" fill="none" stroke="#ff8a7a" stroke-width="1" stroke-linecap="round" opacity="0.8"/><rect x="453.00" y="348.95" width="12" height="2.2" fill="#fff"/></svg>
<div class="x" style="left:504px;top:342px;color:#4aace4">Nana.2005.FRENCH.720p.BluRay.DTS.x264-NEO [0</div>
<div class="x" style="left:909px;top:342px;color:#4aace4">DrunkenSlug (Prowlarr)</div>
<div class="x" style="left:1170px;top:342px;color:#4aace4">5.5 GB</div>
<div class="x" style="left:1404px;top:342px;color:#4aace4">French</div>
<div class="x" style="left:1512px;top:342px;color:#4aace4">Bluray-720p</div>
<div class="x" style="left:261px;top:362px;color:#4aace4">usenet</div>
<div class="x" style="left:351px;top:362px;color:#4aace4">3117 days</div>
<svg width="1899" height="980" viewBox="0 0 1899 980"><circle cx="459.00" cy="369.85" r="7.6" fill="#ee3e2f" stroke="#d9302a" stroke-width="0.8"/><path d="M453.40 367.25Q454.40 364.45 457.20 363.65" fill="none" stroke="#ff8a7a" stroke-width="1" stroke-linecap="round" opacity="0.8"/><rect x="453.00" y="368.95" width="12" height="2.2" fill="#fff"/></svg>
<div class="x" style="left:504px;top:362px;color:#4aace4">Nana.2005.DVDRip.XviD.AC3-SVO (or other scen</div>
<div class="x" style="left:909px;top:362px;color:#4aace4">DrunkenSlug (Prowlarr)</div>
<div class="x" style="left:1170px;top:362px;color:#4aace4">1.8 GB</div>
<div class="x" style="left:1404px;top:362px;color:#4aace4">Japanese</div>
<div class="x" style="left:1512px;top:362px;color:#4aace4">DVD</div>
<div class="x" style="left:261px;top:382px;color:#4aace4">usenet</div>
<div class="x" style="left:351px;top:382px;color:#4aace4">3117 days</div>
<svg width="1899" height="980" viewBox="0 0 1899 980"><circle cx="459.00" cy="389.85" r="7.6" fill="#ee3e2f" stroke="#d9302a" stroke-width="0.8"/><path d="M453.40 387.25Q454.40 384.45 457.20 383.65" fill="none" stroke="#ff8a7a" stroke-width="1" stroke-linecap="round" opacity="0.8"/><rect x="453.00" y="388.95" width="12" height="2.2" fill="#fff"/></svg>
<div class="x" style="left:504px;top:382px;color:#4aace4">Nana.2005.DVDRip.XviD.AC3-SVO (or other scen</div>
<div class="x" style="left:909px;top:382px;color:#4aace4">DrunkenSlug (Prowlarr)</div>
<div class="x" style="left:1170px;top:382px;color:#4aace4">1.8 GB</div>
<div class="x" style="left:1404px;top:382px;color:#4aace4">Japanese</div>
<div class="x" style="left:1512px;top:382px;color:#4aace4">DVD</div>
<div class="x" style="left:261px;top:402px;color:#4aace4">usenet</div>
<div class="x" style="left:351px;top:402px;color:#4aace4">3117 days</div>
<svg width="1899" height="980" viewBox="0 0 1899 980"><circle cx="459.00" cy="409.85" r="7.6" fill="#ee3e2f" stroke="#d9302a" stroke-width="0.8"/><path d="M453.40 407.25Q454.40 404.45 457.20 403.65" fill="none" stroke="#ff8a7a" stroke-width="1" stroke-linecap="round" opacity="0.8"/><rect x="453.00" y="408.95" width="12" height="2.2" fill="#fff"/></svg>
<div class="x" style="left:504px;top:402px;color:#4aace4">nana.2005.dvdrip.xvid.fragment</div>
<div class="x" style="left:909px;top:402px;color:#4aace4">Miatrix (Prowlarr)</div>
<div class="x" style="left:1170px;top:402px;color:#4aace4">1.8 GB</div>
<div class="x" style="left:1404px;top:402px;color:#4aace4">Japanese</div>
<div class="x" style="left:1512px;top:402px;color:#4aace4">DVD</div>
<div class="x" style="left:261px;top:422px;color:#4aace4">torrent</div>
<div class="x" style="left:351px;top:422px;color:#4aace4">2190 days</div>
<svg width="1899" height="980" viewBox="0 0 1899 980"><circle cx="459.00" cy="429.85" r="7.6" fill="#ee3e2f" stroke="#d9302a" stroke-width="0.8"/><path d="M453.40 427.25Q454.40 424.45 457.20 423.65" fill="none" stroke="#ff8a7a" stroke-width="1" stroke-linecap="round" opacity="0.8"/><rect x="453.00" y="428.95" width="12" height="2.2" fill="#fff"/></svg>
<div class="x" style="left:504px;top:422px;color:#4aace4">Nana (2005)</div>
<div class="x" style="left:909px;top:422px;color:#4aace4">kickasstorrents.ws (Prowlarr</div>
<div class="x" style="left:1170px;top:422px;color:#4aace4">2.8 GB</div>
<div class="x" style="left:1287px;top:422px;color:#5fc0a8">2 / 0</div>
<div class="x" style="left:1404px;top:422px;color:#4aace4">Japanese</div>
<div class="x" style="left:1512px;top:422px;color:#4aace4">Unknown</div>
<div class="x" style="left:261px;top:442px;color:#4aace4">usenet</div>
<div class="x" style="left:351px;top:442px;color:#4aace4">0 days</div>
<svg width="1899" height="980" viewBox="0 0 1899 980"><circle cx="459.00" cy="449.85" r="7.6" fill="#ee3e2f" stroke="#d9302a" stroke-width="0.8"/><path d="M453.40 447.25Q454.40 444.45 457.20 443.65" fill="none" stroke="#ff8a7a" stroke-width="1" stroke-linecap="round" opacity="0.8"/><rect x="453.00" y="448.95" width="12" height="2.2" fill="#fff"/></svg>
<div class="x" style="left:504px;top:442px;color:#4aace4">Lord.of.War.2005.2160p.BluRay.UHD.REMUX.DV.H</div>
<div class="x" style="left:909px;top:442px;color:#4aace4">DrunkenSlug (Prowlarr)</div>
<div class="x" style="left:1170px;top:442px;color:#4aace4">75.2 GB</div>
<div class="x" style="left:1404px;top:442px;color:#4aace4">English</div>
<div class="x" style="left:1512px;top:442px;color:#4aace4">Remux-2160p</div>
<div class="x" style="left:261px;top:462px;color:#4aace4">usenet</div>
<div class="x" style="left:351px;top:462px;color:#4aace4">3194 days</div>
<svg width="1899" height="980" viewBox="0 0 1899 980"><circle cx="459.00" cy="469.85" r="7.6" fill="#ee3e2f" stroke="#d9302a" stroke-width="0.8"/><path d="M453.40 467.25Q454.40 464.45 457.20 463.65" fill="none" stroke="#ff8a7a" stroke-width="1" stroke-linecap="round" opacity="0.8"/><rect x="453.00" y="468.95" width="12" height="2.2" fill="#fff"/></svg>
<div class="x" style="left:504px;top:462px;color:#4aace4">Lord.of.War.2005.1080p.BluRay.x264-SECTOR7</div>
<div class="x" style="left:909px;top:462px;color:#4aace4">DrunkenSlug (Prowlarr)</div>
<div class="x" style="left:1170px;top:462px;color:#4aace4">10.4 GB</div>
<div class="x" style="left:1404px;top:462px;color:#4aace4">English</div>
<div class="x" style="left:1512px;top:462px;color:#4aace4">Bluray-1080p</div>
<div class="x" style="left:261px;top:482px;color:#4aace4">usenet</div>
<div class="x" style="left:351px;top:482px;color:#4aace4">285 days</div>
<svg width="1899" height="980" viewBox="0 0 1899 980"><circle cx="459.00" cy="489.85" r="7.6" fill="#ee3e2f" stroke="#d9302a" stroke-width="0.8"/><path d="M453.40 487.25Q454.40 484.45 457.20 483.65" fill="none" stroke="#ff8a7a" stroke-width="1" stroke-linecap="round" opacity="0.8"/><rect x="453.00" y="488.95" width="12" height="2.2" fill="#fff"/></svg>
<div class="x" style="left:504px;top:482px;color:#4aace4">(????) [01/34] - &quot;Lord of War - 2005 - germa</div>
<div class="x" style="left:909px;top:482px;color:#4aace4">DrunkenSlug (Prowlarr)</div>
<div class="x" style="left:1170px;top:482px;color:#4aace4">2.6 GB</div>
<div class="x" style="left:1404px;top:482px;color:#4aace4">German</div>
<div class="x" style="left:1512px;top:482px;color:#4aace4">Unknown</div>
<div class="x" style="left:261px;top:502px;color:#4aace4">usenet</div>
<div class="x" style="left:351px;top:502px;color:#4aace4">27 days</div>
<svg width="1899" height="980" viewBox="0 0 1899 980"><circle cx="459.00" cy="509.85" r="7.6" fill="#ee3e2f" stroke="#d9302a" stroke-width="0.8"/><path d="M453.40 507.25Q454.40 504.45 457.20 503.65" fill="none" stroke="#ff8a7a" stroke-width="1" stroke-linecap="round" opacity="0.8"/><rect x="453.00" y="508.95" width="12" height="2.2" fill="#fff"/></svg>
<div class="x" style="left:504px;top:502px;color:#4aace4">[02/44] &quot;Transporter 2.2005.1080P.DSNP.WEB-D</div>
<div class="x" style="left:909px;top:502px;color:#4aace4">DrunkenSlug (Prowlarr)</div>
<div class="x" style="left:1170px;top:502px;color:#4aace4">5.6 GB</div>
<div class="x" style="left:1404px;top:502px;color:#4aace4">English</div>
<div class="x" style="left:1512px;top:502px;color:#4aace4">WEBDL-1080p</div>
<div class="x" style="left:261px;top:522px;color:#4aace4">usenet</div>
<div class="x" style="left:351px;top:522px;color:#4aace4">82 days</div>
<svg width="1899" height="980" viewBox="0 0 1899 980"><circle cx="459.00" cy="529.85" r="7.6" fill="#ee3e2f" stroke="#d9302a" stroke-width="0.8"/><path d="M453.40 527.25Q454.40 524.45 457.20 523.65" fill="none" stroke="#ff8a7a" stroke-width="1" stroke-linecap="round" opacity="0.8"/><rect x="453.00" y="528.95" width="12" height="2.2" fill="#fff"/></svg>
<div class="x" style="left:504px;top:522px;color:#4aace4">[02/83] &quot;Harry.Potter.and.the.Goblet.of.Fire</div>
<div class="x" style="left:909px;top:522px;color:#4aace4">DrunkenSlug (Prowlarr)</div>
<div class="x" style="left:1170px;top:522px;color:#4aace4">7.7 GB</div>
<div class="x" style="left:1404px;top:522px;color:#4aace4">English</div>
<div class="x" style="left:1512px;top:522px;color:#4aace4">Bluray-2160p</div>
<div class="x" style="left:261px;top:542px;color:#4aace4">usenet</div>
<div class="x" style="left:351px;top:542px;color:#4aace4">2916 days</div>
<svg width="1899" height="980" viewBox="0 0 1899 980"><circle cx="459.00" cy="549.85" r="7.6" fill="#ee3e2f" stroke="#d9302a" stroke-width="0.8"/><path d="M453.40 547.25Q454.40 544.45 457.20 543.65" fill="none" stroke="#ff8a7a" stroke-width="1" stroke-linecap="round" opacity="0.8"/><rect x="453.00" y="548.95" width="12" height="2.2" fill="#fff"/></svg>
<div class="x" style="left:504px;top:542px;color:#4aace4">Harry.Potter.and.the.Goblet.of.Fire.2005.Blu</div>
<div class="x" style="left:909px;top:542px;color:#4aace4">DrunkenSlug (Prowlarr)</div>
<div class="x" style="left:1170px;top:542px;color:#4aace4">14.4 GB</div>
<div class="x" style="left:1404px;top:542px;color:#4aace4">English</div>
<div class="x" style="left:1512px;top:542px;color:#4aace4">Bluray-720p</div>
<div class="x" style="left:261px;top:562px;color:#4aace4">usenet</div>
<div class="x" style="left:351px;top:562px;color:#4aace4">2576 days</div>
<svg width="1899" height="980" viewBox="0 0 1899 980"><circle cx="459.00" cy="569.85" r="7.6" fill="#ee3e2f" stroke="#d9302a" stroke-width="0.8"/><path d="M453.40 567.25Q454.40 564.45 457.20 563.65" fill="none" stroke="#ff8a7a" stroke-width="1" stroke-linecap="round" opacity="0.8"/><rect x="453.00" y="568.95" width="12" height="2.2" fill="#fff"/></svg>
<div class="x" style="left:504px;top:562px;color:#4aace4">The.Goblet.Of.Fire.2005.BluRay.720p.H264.20-</div>
<div class="x" style="left:909px;top:562px;color:#4aace4">DrunkenSlug (Prowlarr)</div>
<div class="x" style="left:1170px;top:562px;color:#4aace4">1.1 GB</div>
<div class="x" style="left:1404px;top:562px;color:#4aace4">English</div>
<div class="x" style="left:1512px;top:562px;color:#4aace4">Bluray-720p</div>
<div class="x" style="left:261px;top:582px;color:#4aace4">usenet</div>
<div class="x" style="left:351px;top:582px;color:#4aace4">3273 days</div>
<svg width="1899" height="980" viewBox="0 0 1899 980"><circle cx="459.00" cy="589.85" r="7.6" fill="#ee3e2f" stroke="#d9302a" stroke-width="0.8"/><path d="M453.40 587.25Q454.40 584.45 457.20 583.65" fill="none" stroke="#ff8a7a" stroke-width="1" stroke-linecap="round" opacity="0.8"/><rect x="453.00" y="588.95" width="12" height="2.2" fill="#fff"/></svg>
<div class="x" style="left:504px;top:582px;color:#4aace4">The.Goblet.Of.Fire.2005.BluRay.720p.H264.20-</div>
<div class="x" style="left:909px;top:582px;color:#4aace4">DrunkenSlug (Prowlarr)</div>
<div class="x" style="left:1170px;top:582px;color:#4aace4">1.0 GB</div>
<div class="x" style="left:1404px;top:582px;color:#4aace4">English</div>
<div class="x" style="left:1512px;top:582px;color:#4aace4">Bluray-720p</div>
<div class="x" style="left:261px;top:602px;color:#4aace4">usenet</div>
<div class="x" style="left:351px;top:602px;color:#4aace4">2689 days</div>
<svg width="1899" height="980" viewBox="0 0 1899 980"><circle cx="459.00" cy="609.85" r="7.6" fill="#ee3e2f" stroke="#d9302a" stroke-width="0.8"/><path d="M453.40 607.25Q454.40 604.45 457.20 603.65" fill="none" stroke="#ff8a7a" stroke-width="1" stroke-linecap="round" opacity="0.8"/><rect x="453.00" y="608.95" width="12" height="2.2" fill="#fff"/></svg>
<div class="x" style="left:504px;top:602px;color:#4aace4">Harry.Potter.and.the.Goblet.of.Fire.2005.DVD</div>
<div class="x" style="left:909px;top:602px;color:#4aace4">DrunkenSlug (Prowlarr)</div>
<div class="x" style="left:1170px;top:602px;color:#4aace4">1.0 GB</div>
<div class="x" style="left:1404px;top:602px;color:#4aace4">English</div>
<div class="x" style="left:1512px;top:602px;color:#4aace4">DVD</div>
<div class="x" style="left:261px;top:622px;color:#4aace4">usenet</div>
<div class="x" style="left:351px;top:622px;color:#4aace4">3024 days</div>
<svg width="1899" height="980" viewBox="0 0 1899 980"><circle cx="459.00" cy="629.85" r="7.6" fill="#ee3e2f" stroke="#d9302a" stroke-width="0.8"/><path d="M453.40 627.25Q454.40 624.45 457.20 623.65" fill="none" stroke="#ff8a7a" stroke-width="1" stroke-linecap="round" opacity="0.8"/><rect x="453.00" y="628.95" width="12" height="2.2" fill="#fff"/></svg>
<div class="x" style="left:504px;top:622px;color:#4aace4">V.for.Vendetta.2005.Blu-ray.CEE.1080p.VC-1.D</div>
<div class="x" style="left:909px;top:622px;color:#4aace4">DrunkenSlug (Prowlarr)</div>
<div class="x" style="left:1170px;top:622px;color:#4aace4">30.8 GB</div>
<div class="x" style="left:1404px;top:622px;color:#4aace4">English</div>
<div class="x" style="left:1512px;top:622px;color:#4aace4">BR-DISK</div>
<div class="x" style="left:261px;top:642px;color:#4aace4">usenet</div>
<div class="x" style="left:351px;top:642px;color:#4aace4">2993 days</div>
<svg width="1899" height="980" viewBox="0 0 1899 980"><circle cx="459.00" cy="649.85" r="7.6" fill="#ee3e2f" stroke="#d9302a" stroke-width="0.8"/><path d="M453.40 647.25Q454.40 644.45 457.20 643.65" fill="none" stroke="#ff8a7a" stroke-width="1" stroke-linecap="round" opacity="0.8"/><rect x="453.00" y="648.95" width="12" height="2.2" fill="#fff"/></svg>
<div class="x" style="left:504px;top:642px;color:#4aace4">V.for.Vendetta.2005.1080p.BluRay.DTS.x264-Cy</div>
<div class="x" style="left:909px;top:642px;color:#4aace4">DrunkenSlug (Prowlarr)</div>
<div class="x" style="left:1170px;top:642px;color:#4aace4">12.1 GB</div>
<div class="x" style="left:1404px;top:642px;color:#4aace4">English</div>
<div class="x" style="left:1512px;top:642px;color:#4aace4">Bluray-1080p</div>
<div class="x" style="left:261px;top:662px;color:#4aace4">usenet</div>
<div class="x" style="left:351px;top:662px;color:#4aace4">3064 days</div>
<svg width="1899" height="980" viewBox="0 0 1899 980"><circle cx="459.00" cy="669.85" r="7.6" fill="#ee3e2f" stroke="#d9302a" stroke-width="0.8"/><path d="M453.40 667.25Q454.40 664.45 457.20 663.65" fill="none" stroke="#ff8a7a" stroke-width="1" stroke-linecap="round" opacity="0.8"/><rect x="453.00" y="668.95" width="12" height="2.2" fill="#fff"/></svg>
<div class="x" style="left:504px;top:662px;color:#4aace4">V.for.Vendetta.2005.1080p.BluRay.DTS.x264-Cy</div>
<div class="x" style="left:909px;top:662px;color:#4aace4">DrunkenSlug (Prowlarr)</div>
<div class="x" style="left:1170px;top:662px;color:#4aace4">12.1 GB</div>
<div class="x" style="left:1404px;top:662px;color:#4aace4">English</div>
<div class="x" style="left:1512px;top:662px;color:#4aace4">Bluray-1080p</div>
<div class="x" style="left:261px;top:682px;color:#4aace4">usenet</div>
<div class="x" style="left:351px;top:682px;color:#4aace4">3101 days</div>
<svg width="1899" height="980" viewBox="0 0 1899 980"><circle cx="459.00" cy="689.85" r="7.6" fill="#ee3e2f" stroke="#d9302a" stroke-width="0.8"/><path d="M453.40 687.25Q454.40 684.45 457.20 683.65" fill="none" stroke="#ff8a7a" stroke-width="1" stroke-linecap="round" opacity="0.8"/><rect x="453.00" y="688.95" width="12" height="2.2" fill="#fff"/></svg>
<div class="x" style="left:504px;top:682px;color:#4aace4">V.for.Vendetta.2005.1080p.BluRay.DTS.x264-Cy</div>
<div class="x" style="left:909px;top:682px;color:#4aace4">DrunkenSlug (Prowlarr)</div>
<div class="x" style="left:1170px;top:682px;color:#4aace4">12.1 GB</div>
<div class="x" style="left:1404px;top:682px;color:#4aace4">English</div>
<div class="x" style="left:1512px;top:682px;color:#4aace4">Bluray-1080p</div>
<div class="x" style="left:261px;top:702px;color:#4aace4">usenet</div>
<div class="x" style="left:351px;top:702px;color:#4aace4">3101 days</div>
<svg width="1899" height="980" viewBox="0 0 1899 980"><circle cx="459.00" cy="709.85" r="7.6" fill="#ee3e2f" stroke="#d9302a" stroke-width="0.8"/><path d="M453.40 707.25Q454.40 704.45 457.20 703.65" fill="none" stroke="#ff8a7a" stroke-width="1" stroke-linecap="round" opacity="0.8"/><rect x="453.00" y="708.95" width="12" height="2.2" fill="#fff"/></svg>
<div class="x" style="left:504px;top:702px;color:#4aace4">V.for.Vendetta.2005.1080p.BluRay.DTS.x264-Cy</div>
<div class="x" style="left:909px;top:702px;color:#4aace4">DrunkenSlug (Prowlarr)</div>
<div class="x" style="left:1170px;top:702px;color:#4aace4">12.1 GB</div>
<div class="x" style="left:1404px;top:702px;color:#4aace4">English</div>
<div class="x" style="left:1512px;top:702px;color:#4aace4">Bluray-1080p</div>
<div class="x" style="left:261px;top:722px;color:#4aace4">usenet</div>
<div class="x" style="left:351px;top:722px;color:#4aace4">3275 days</div>
<svg width="1899" height="980" viewBox="0 0 1899 980"><circle cx="459.00" cy="729.85" r="7.6" fill="#ee3e2f" stroke="#d9302a" stroke-width="0.8"/><path d="M453.40 727.25Q454.40 724.45 457.20 723.65" fill="none" stroke="#ff8a7a" stroke-width="1" stroke-linecap="round" opacity="0.8"/><rect x="453.00" y="728.95" width="12" height="2.2" fill="#fff"/></svg>
<div class="x" style="left:504px;top:722px;color:#4aace4">-&quot;V pour vendetta.2005.BRrip.1080p.x264-DTS.</div>
<div class="x" style="left:909px;top:722px;color:#4aace4">DrunkenSlug (Prowlarr)</div>
<div class="x" style="left:1170px;top:722px;color:#4aace4">8.9 GB</div>
<div class="x" style="left:1404px;top:722px;color:#4aace4">English</div>
<div class="x" style="left:1512px;top:722px;color:#4aace4">Bluray-1080p</div>
<div class="x" style="left:261px;top:742px;color:#4aace4">usenet</div>
<div class="x" style="left:351px;top:742px;color:#4aace4">192 days</div>
<svg width="1899" height="980" viewBox="0 0 1899 980"><circle cx="459.00" cy="749.85" r="7.6" fill="#ee3e2f" stroke="#d9302a" stroke-width="0.8"/><path d="M453.40 747.25Q454.40 744.45 457.20 743.65" fill="none" stroke="#ff8a7a" stroke-width="1" stroke-linecap="round" opacity="0.8"/><rect x="453.00" y="748.95" width="12" height="2.2" fill="#fff"/></svg>
<div class="x" style="left:504px;top:742px;color:#4aace4">V wie Vendetta - 2005 - german - der sir - [</div>
<div class="x" style="left:909px;top:742px;color:#4aace4">DrunkenSlug (Prowlarr)</div>
<div class="x" style="left:1170px;top:742px;color:#4aace4">2.1 GB</div>
<div class="x" style="left:1404px;top:742px;color:#4aace4">German</div>
<div class="x" style="left:1512px;top:742px;color:#4aace4">Unknown</div>
<div class="x" style="left:261px;top:762px;color:#4aace4">usenet</div>
<div class="x" style="left:351px;top:762px;color:#4aace4">398 days</div>
<svg width="1899" height="980" viewBox="0 0 1899 980"><circle cx="459.00" cy="769.85" r="7.6" fill="#ee3e2f" stroke="#d9302a" stroke-width="0.8"/><path d="M453.40 767.25Q454.40 764.45 457.20 763.65" fill="none" stroke="#ff8a7a" stroke-width="1" stroke-linecap="round" opacity="0.8"/><rect x="453.00" y="768.95" width="12" height="2.2" fill="#fff"/></svg>
<div class="x" style="left:504px;top:762px;color:#4aace4">Tom.And.Jerry.The.Fast.And.The.Furry.2005.FR</div>
<div class="x" style="left:909px;top:762px;color:#4aace4">DrunkenSlug (Prowlarr)</div>
<div class="x" style="left:1170px;top:762px;color:#4aace4">2.7 GB</div>
<div class="x" style="left:1404px;top:762px;color:#4aace4">French</div>
<div class="x" style="left:1512px;top:762px;color:#4aace4">Bluray-720p</div>
<div class="x" style="left:261px;top:782px;color:#4aace4">usenet</div>
<div class="x" style="left:351px;top:782px;color:#4aace4">492 days</div>
<svg width="1899" height="980" viewBox="0 0 1899 980"><circle cx="459.00" cy="789.85" r="7.6" fill="#ee3e2f" stroke="#d9302a" stroke-width="0.8"/><path d="M453.40 787.25Q454.40 784.45 457.20 783.65" fill="none" stroke="#ff8a7a" stroke-width="1" stroke-linecap="round" opacity="0.8"/><rect x="453.00" y="788.95" width="12" height="2.2" fill="#fff"/></svg>
<div class="x" style="left:504px;top:782px;color:#4aace4">(????) [01/65] - &quot;Miss Undercover 2- Fabelha</div>
<div class="x" style="left:909px;top:782px;color:#4aace4">DrunkenSlug (Prowlarr)</div>
<div class="x" style="left:1170px;top:782px;color:#4aace4">11.4 GB</div>
<div class="x" style="left:1404px;top:782px;color:#4aace4">German</div>
<div class="x" style="left:1512px;top:782px;color:#4aace4">Unknown</div>
<svg width="1899" height="980" viewBox="0 0 1899 980"><rect x="234" y="809.50" width="1413" height="1.45" fill="#ffffff"/></svg>
<div class="x" style="left:243px;top:822px;color:#3383e8">&lt;enter&gt; details</div>
</div></body></html>
